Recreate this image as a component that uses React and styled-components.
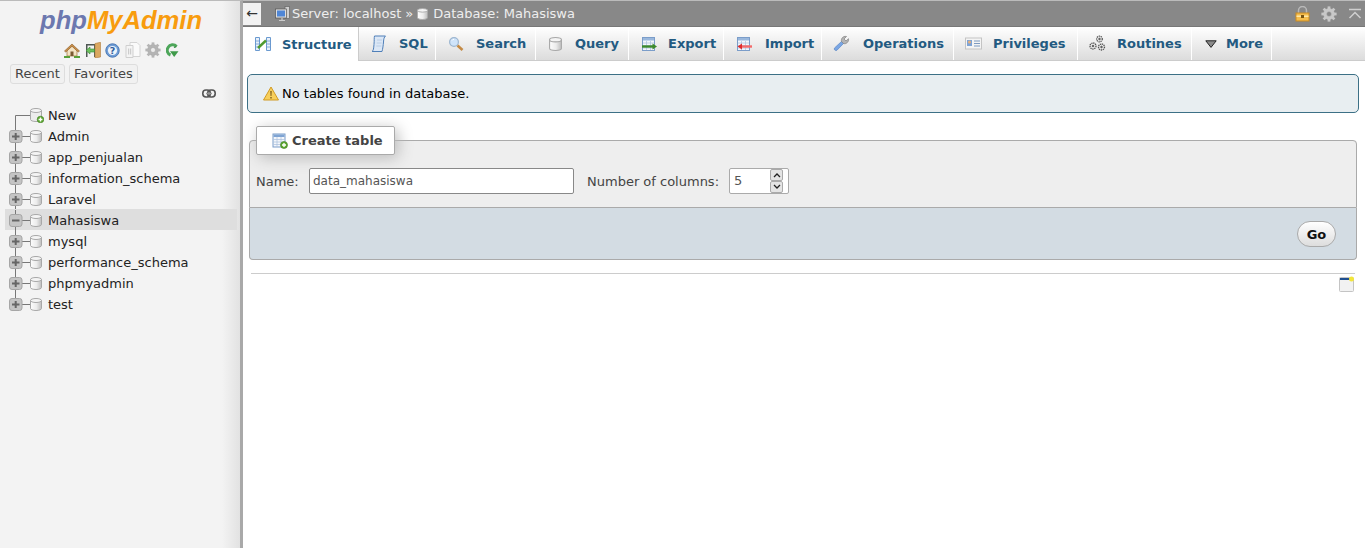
import styled, { createGlobalStyle } from "styled-components"

const GlobalStyle = createGlobalStyle`
  html, body {
    margin: 0;
    height: 100%;
    overflow: hidden;
    background: #fff;
  }
  body {
    font-family: "DejaVu Sans", sans-serif;
    font-size: 13px;
    color: #444;
  }
  * {
    box-sizing: border-box;
  }
`

const Db = ({ width = 12, height = 13 }) => (
  <svg width={width} height={height} viewBox="0 0 12 13" style={{ flex: "none" }}>
    <defs>
      <linearGradient id="dbg" x1="0" x2="1" y1="0" y2="0">
        <stop offset="0" stopColor="#fdfdfd" />
        <stop offset="0.55" stopColor="#ececec" />
        <stop offset="1" stopColor="#bdbdbd" />
      </linearGradient>
    </defs>
    <path d="M.5 2.500v8c0 1.100 2.400 2 5.500 2s5.500-.9 5.500-2v-8z" fill="url(#dbg)" stroke="#a8a8a8" />
    <ellipse cx="6" cy="2.500" rx="5.500" ry="2" fill="#f4f4f4" stroke="#a8a8a8" />
  </svg>
)

const DbNew = () => (
  <svg width="14" height="15" viewBox="0 0 14 15" style={{ flex: "none" }}>
    <path d="M.5 2.500v9c0 1.100 2.400 2 5.500 2s5.500-.9 5.500-2v-9z" fill="#ececec" stroke="#a8a8a8" />
    <ellipse cx="6" cy="2.500" rx="5.500" ry="2" fill="#f4f4f4" stroke="#a8a8a8" />
    <circle cx="10.500" cy="11.500" r="3.300" fill="#5da833" stroke="#3f7d20" strokeWidth=".6" />
    <path d="M8.600 11.500h3.800M10.500 9.600v3.800" stroke="#fff" strokeWidth="1.300" />
  </svg>
)

const TreeGlyph = ({ state, first, last }) => (
  <svg width="25" height="21" viewBox="0 0 25 21" style={{ flex: "none" }}>
    <path
      d={`M10.500 ${first ? 10.5 : 0}V${last ? 10.5 : 21}M10.500 10.500H25`}
      stroke="#777"
      strokeWidth="1"
      fill="none"
    />
    {state && (
      <>
        <rect x="4.500" y="4.500" width="12.500" height="12" rx="2.500" fill="#c4c4c4" stroke="#a6a6a6" />
        <path d={state === "open" ? "M7 10.500h7.500" : "M7 10.500h7.500M10.700 7v7"} stroke="#666" strokeWidth="2" />
      </>
    )}
  </svg>
)

const Home = () => (
  <svg width="16" height="15" viewBox="0 0 16 15">
    <path d="M3 7v6h10V7L8 3z" fill="#f3e3c4" stroke="#a9804a" strokeWidth=".8" />
    <path d="M.5 8 8 1l7.500 7-1.300 1L8 3.300 1.800 9z" fill="#c98f4b" stroke="#8a5a24" strokeWidth=".6" />
    <rect x="6.500" y="8.500" width="3" height="4.500" fill="#7a5a33" />
    <path d="M0 14h6M10 14h6" stroke="#58a03a" strokeWidth="2" />
  </svg>
)

const Exit = () => (
  <svg width="16" height="16" viewBox="0 0 16 16">
    <path d="M1 2h9.500v13H9V3.500H2.500V15H1z" fill="#4f5854" />
    <path d="M10 1.500l5.500-1.200V15L10 16z" fill="#dba861" stroke="#b07c3e" strokeWidth=".6" />
    <path d="M1 8.500 5 5v2h4.500v3H5v2z" fill="#6cc05e" stroke="#3a8a32" strokeWidth=".6" />
  </svg>
)

const Help = () => (
  <svg width="15" height="15" viewBox="0 0 15 15">
    <circle cx="7.500" cy="7.500" r="6.700" fill="#6f9dd6" stroke="#4a78b5" />
    <circle cx="7.500" cy="7.500" r="4.600" fill="#eef3fa" />
    <text x="7.500" y="11" textAnchor="middle" fontSize="9.500" fontWeight="700" fill="#2f5f9e" fontFamily="DejaVu Sans">?</text>
  </svg>
)

const Docs = () => (
  <svg width="16" height="16" viewBox="0 0 16 16">
    <path d="M5 .5h7l3 3v11H5z" fill="#fafafa" stroke="#d4d4d4" />
    <path d="M1 3.500h7v12H1z" fill="#f4f4f4" stroke="#cfcfcf" />
    <path d="M3 6.500h1.200v6H3zM5 6.500h1.200v6H5z" fill="#cdcdcd" />
  </svg>
)

const Gear = ({ color = "#b4b4b4", hole = "#ececec", edge = "#989898" }) => (
  <svg width="16" height="16" viewBox="0 0 16 16">
    <g fill={color}>
      <circle cx="8" cy="8" r="5.400" stroke={edge} strokeWidth=".5" />
      {[0, 45, 90, 135, 180, 225, 270, 315].map(a => (
        <rect key={a} x="6.600" y="0.400" width="2.800" height="3.400" transform={`rotate(${a} 8 8)`} />
      ))}
    </g>
    <circle cx="8" cy="8" r="2.500" fill={hole} stroke={edge} strokeWidth=".5" />
  </svg>
)

const Reload = () => (
  <svg width="13" height="15" viewBox="0 0 13 15">
    <path d="M10.500 3.500A5 5 0 0 0 2.200 4.300 5 5 0 0 0 4.500 12" fill="none" stroke="#4da65a" strokeWidth="3" />
    <path d="M10.500 3.500l-2.500 1" stroke="#2f8a3c" strokeWidth="1.200" />
    <path d="M4 8.300h8.500L8.200 14z" fill="#3f9a4a" />
  </svg>
)

const LinkIcon = () => (
  <svg width="14" height="9" viewBox="0 0 14 9">
    <rect x=".8" y="1" width="7.500" height="7" rx="3.200" fill="none" stroke="#555" strokeWidth="1.600" />
    <rect x="5.700" y="1" width="7.500" height="7" rx="3.200" fill="none" stroke="#555" strokeWidth="1.600" />
    <path d="M4 4.500h6" stroke="#999" strokeWidth="1.500" />
  </svg>
)

const ServerIcon = () => (
  <svg width="15" height="16" viewBox="0 0 15 16">
    <rect x="10" y="0.500" width="4.500" height="12" fill="#cfcfcf" stroke="#666" strokeWidth=".7" />
    <rect x="0.500" y="3" width="11" height="9" fill="#ddd" stroke="#555" strokeWidth=".7" />
    <rect x="2" y="4.500" width="8" height="6" fill="#4f86d6" />
    <path d="M4 14.500h6M7 12v2" stroke="#ccc" strokeWidth="1.200" />
  </svg>
)

const TableBase = ({ children }) => (
  <svg width="16" height="16" viewBox="0 0 16 16">
    <rect x="1.500" y="1.500" width="12" height="13" fill="#f3f6fb" stroke="#7b9dc9" />
    <rect x="2" y="2" width="11" height="2.500" fill="#9ab8dd" />
    <path d="M2 7h11M2 9.500h11M2 12h11M5.500 5v9M9.500 5v9" stroke="#a9c0dc" strokeWidth=".7" />
    {children}
  </svg>
)

const icons = {
  structure: (
    <svg width="16" height="16" viewBox="0 0 16 16">
      <path d="M.5 1.500h4v13h-4zM11.500 1.500h4v13h-4z" fill="#e8f0fa" stroke="#6b9ad0" />
      <path d="M.5 5h4M.5 8h4M.5 11h4M11.500 5h4M11.500 8h4M11.500 11h4" stroke="#6b9ad0" strokeWidth=".8" />
      <path d="M3 12 11 4.500" stroke="#4f9a2f" strokeWidth="2.400" />
    </svg>
  ),
  sql: (
    <svg width="16" height="18" viewBox="0 0 16 18">
      <path d="M3.500 1h11c-1.400 1-1.800 3-2 6s-.8 7-1.500 9.500H1c1.600-.8 1.600-3 2-7S3 2.500 3.500 1z" fill="#dbe7f6" stroke="#4f7fb8" />
      <path d="M6 5h5M5.700 8h5M5.300 11h5" stroke="#b3c9e3" strokeWidth=".8" />
    </svg>
  ),
  search: (
    <svg width="16" height="16" viewBox="0 0 16 16">
      <circle cx="6" cy="6" r="4.400" fill="#cfe4fa" stroke="#9db6d0" strokeWidth="1.200" />
      <path d="M4 4.500a2.500 2.500 0 0 1 2-1.200" stroke="#fff" strokeWidth="1" fill="none" />
      <path d="M9.500 9.500 14.500 14" stroke="#c48a45" strokeWidth="2.600" />
    </svg>
  ),
  query: <Db width={13} height={14} />,
  export: (
    <TableBase>
      <path d="M1 10.500h11" stroke="#3c8a2c" strokeWidth="2.400" />
      <path d="M11.500 7.500 16 10.500l-4.500 3z" fill="#3c8a2c" />
    </TableBase>
  ),
  import: (
    <TableBase>
      <path d="M5 10.500h11" stroke="#f46a6a" strokeWidth="2.400" />
      <path d="M6 7.500 1.500 10.500l4.500 3z" fill="#e02b2b" />
    </TableBase>
  ),
  operations: (
    <svg width="17" height="17" viewBox="0 0 17 17">
      <path d="M1.500 13 9 6l2 2-7 7.200c-1.500 1-3.500-.6-2.500-2.200z" fill="#7aa6e4" stroke="#5a86c4" strokeWidth=".7" />
      <path d="M8.500 6.500c-.8-3 1.800-5.800 5-5l-2.500 2.500 2 2 2.500-2.300c.6 3-2.300 5.800-5 4.800z" fill="#b4b4b4" stroke="#808080" strokeWidth=".7" />
    </svg>
  ),
  privileges: (
    <svg width="17" height="13" viewBox="0 0 17 13">
      <rect x=".5" y="1" width="16" height="11" fill="#f4f4f4" stroke="#c4c4c4" />
      <rect x="2" y="3" width="5" height="6" fill="#7da3d6" />
      <circle cx="4.500" cy="5" r="1.500" fill="#e7b07a" />
      <path d="M9 4h6M9 6.500h6M9 9h6" stroke="#7d9ac0" strokeWidth="1" />
    </svg>
  ),
  routines: (
    <svg width="17" height="17" viewBox="0 0 17 17" fill="none" stroke="#555" strokeDasharray="1.300 .7">
      <circle cx="10.500" cy="4" r="2.800" strokeWidth="1.300" />
      <circle cx="4" cy="11" r="3" strokeWidth="1.300" />
      <circle cx="12.500" cy="12" r="3" strokeWidth="1.300" />
      <circle cx="10.500" cy="4" r=".8" fill="#555" strokeDasharray="none" />
      <circle cx="4" cy="11" r=".8" fill="#555" strokeDasharray="none" />
      <circle cx="12.500" cy="12" r=".8" fill="#555" strokeDasharray="none" />
    </svg>
  ),
}

const DownTri = () => (
  <svg width="12" height="8" viewBox="0 0 12 8">
    <path d="M.8.800h10.400L6 7.400z" fill="#8a8a8a" stroke="#222" strokeWidth="1" strokeLinejoin="round" />
  </svg>
)

const Warn = () => (
  <svg width="16" height="15" viewBox="0 0 16 15">
    <path d="M8 1 15.500 14H.5z" fill="#f7cf5b" stroke="#d09a24" strokeLinejoin="round" />
    <path d="M7.200 5h1.600l-.3 5h-1zM7.200 11h1.600v1.500H7.200z" fill="#8a6a20" />
  </svg>
)

const NewTable = () => (
  <svg width="16" height="16" viewBox="0 0 16 16">
    <rect x="1" y="1" width="12" height="13" fill="#f3f6fb" stroke="#7b9dc9" />
    <rect x="1.500" y="1.500" width="11" height="2.500" fill="#7fa4d3" />
    <path d="M1.500 6.500h11M1.500 9h11M1.500 11.500h11M5 4v10M9 4v10" stroke="#a9c0dc" strokeWidth=".7" />
    <circle cx="12" cy="12" r="3.500" fill="#5da833" stroke="#3f7d20" strokeWidth=".6" />
    <path d="M10 12h4M12 10v4" stroke="#fff" strokeWidth="1.300" />
  </svg>
)

const LockIcon = () => (
  <svg width="15" height="16" viewBox="0 0 15 16">
    <path d="M3.500 7V4.500a4 4 0 0 1 8 0V7" fill="none" stroke="#b9b9b9" strokeWidth="1.500" />
    <rect x="1" y="7" width="13" height="8" fill="#f5bd4c" stroke="#c98a20" />
    <rect x="1.500" y="9.500" width="12" height="1.500" fill="#fde7a8" />
    <rect x="6" y="9" width="3" height="3" fill="#7a5510" />
  </svg>
)

const CollapseUp = () => (
  <svg width="14" height="12" viewBox="0 0 14 12" fill="none" stroke="#cfcfcf" strokeWidth="1.500">
    <path d="M1 1.500h12M1.500 10 7 4.500 12.500 10" />
  </svg>
)

const ConsoleIcon = () => (
  <svg width="15" height="16" viewBox="0 0 15 16">
    <rect x=".5" y="1.500" width="14" height="14" rx="1" fill="#f2f2f2" stroke="#c4c4c4" />
    <rect x="1" y="2" width="11" height="2" fill="#1f4f8f" />
    <circle cx="12.500" cy="3" r="2.500" fill="#f2e63c" />
  </svg>
)

const Chevron = ({ up }) => (
  <svg width="8" height="6" viewBox="0 0 8 6" fill="none" stroke="#222" strokeWidth="1.300">
    <path d={up ? "M1 5 4 2l3 3" : "M1 1l3 3 3-3"} />
  </svg>
)

const databases = [
  "Admin",
  "app_penjualan",
  "information_schema",
  "Laravel",
  "Mahasiswa",
  "mysql",
  "performance_schema",
  "phpmyadmin",
  "test",
]

const tabs = [
  { key: "structure", label: "Structure", width: 116, gap: 11, active: true },
  { key: "sql", label: "SQL", width: 77, gap: 12 },
  { key: "search", label: "Search", width: 100, gap: 12 },
  { key: "query", label: "Query", width: 93, gap: 11 },
  { key: "export", label: "Export", width: 95, gap: 11 },
  { key: "import", label: "Import", width: 98, gap: 13 },
  { key: "operations", label: "Operations", width: 132, gap: 13 },
  { key: "privileges", label: "Privileges", width: 124, gap: 11 },
  { key: "routines", label: "Routines", width: 114, gap: 11 },
]

export default function App() {
  return (
    <>
      <GlobalStyle />
      <Page>
        <Sidebar>
          <Logo>
            <span>php</span>
            <b>MyAdmin</b>
          </Logo>
          <IconRow>
            <Home />
            <Exit />
            <Help />
            <Docs />
            <Gear />
            <Reload />
          </IconRow>
          <RecentRow>
            <Pill>Recent</Pill>
            <Pill>Favorites</Pill>
          </RecentRow>
          <LinkRow>
            <LinkIcon />
          </LinkRow>
          <Tree>
            <TreeRow>
              <TreeGlyph first />
              <DbNew />
              <TreeLabel $new>New</TreeLabel>
            </TreeRow>
            {databases.map((name, i) => (
              <TreeRow key={name} $selected={name === "Mahasiswa"}>
                <TreeGlyph state={name === "Mahasiswa" ? "open" : "closed"} last={i === databases.length - 1} />
                <Db />
                <TreeLabel>{name}</TreeLabel>
              </TreeRow>
            ))}
          </Tree>
        </Sidebar>

        <Main>
          <TopBar>
            <BackButton>←</BackButton>
            <Crumbs>
              <ServerIcon />
              <span>Server: localhost</span>
              <Sep>»</Sep>
              <Db width={11} height={12} />
              <DbName>Database: Mahasiswa</DbName>
            </Crumbs>
            <TopIcons>
              <LockIcon />
              <Gear color="#c8c8c8" hole="#888" edge="#c8c8c8" />
              <CollapseUp />
            </TopIcons>
          </TopBar>

          <TabBar>
            {tabs.map(t => (
              <Tab key={t.key} $active={t.active} $width={t.width}>
                <TabIcon $gap={t.gap}>{icons[t.key]}</TabIcon>
                {t.label}
              </Tab>
            ))}
            <MoreTab>
              <DownTri />
              More
            </MoreTab>
          </TabBar>

          <Content>
            <Notice>
              <Warn />
              No tables found in database.
            </Notice>

            <CreateForm>
              <Legend>
                <NewTable />
                Create table
              </Legend>
              <FormRow>
                <FieldLabel>Name:</FieldLabel>
                <NameInput>data_mahasiswa</NameInput>
                <ColumnsLabel>Number of columns:</ColumnsLabel>
                <Spinner>
                  <SpinValue>5</SpinValue>
                  <SpinButtons>
                    <SpinButton><Chevron up /></SpinButton>
                    <SpinButton><Chevron /></SpinButton>
                  </SpinButtons>
                </Spinner>
              </FormRow>
            </CreateForm>
            <FormFooter>
              <GoButton>Go</GoButton>
            </FormFooter>

            <Rule />
            <ConsoleRow>
              <ConsoleIcon />
            </ConsoleRow>
          </Content>
        </Main>
      </Page>
    </>
  )
}

const Page = styled.div`
  display: flex;
  height: 548px;
  overflow: hidden;
`

const Sidebar = styled.aside`
  width: 243px;
  flex: none;
  height: 100%;
  background: linear-gradient(to right, #f3f3f3 0, #f3f3f3 222px, #e2e2e2 240px);
  border-right: 3px solid #a9a9a9;
  border-top: 1px solid #bbb;
`

const Logo = styled.div`
  height: 41px;
  padding: 4px 0 0 40px;
  font-family: "Liberation Sans", sans-serif;
  font-style: italic;
  font-weight: 700;
  font-size: 25.600px;
  line-height: 30px;
  white-space: nowrap;
  span {
    color: #6c78af;
  }
  b {
    color: #f89c0e;
  }
`

const IconRow = styled.div`
  display: flex;
  align-items: center;
  gap: 4.500px;
  height: 16px;
  padding-left: 64px;
`

const RecentRow = styled.div`
  display: flex;
  gap: 4px;
  margin-top: 6px;
  padding-left: 10px;
`

const Pill = styled.div`
  height: 20px;
  padding: 0 4px;
  line-height: 18px;
  color: #444;
  background: #f1f1f1;
  border: 1px solid #ddd;
  border-radius: 3px;
`

const LinkRow = styled.div`
  display: flex;
  justify-content: flex-end;
  height: 20px;
  padding: 5px 24px 0 0;
`

const Tree = styled.div`
  display: flex;
  flex-direction: column;
`

const TreeRow = styled.div`
  display: flex;
  align-items: center;
  height: 21px;
  padding-top: 2px;
  margin: 0 3px 0 5px;
  background: ${p => (p.$selected ? "#dedede" : "transparent")};
`

const TreeLabel = styled.span`
  margin-left: ${p => (p.$new ? "4px" : "6px")};
  color: #222;
`

const Main = styled.main`
  flex: 1;
  min-width: 0;
  display: flex;
  flex-direction: column;
`

const TopBar = styled.div`
  display: flex;
  align-items: center;
  height: 27px;
  flex: none;
  background: #888;
  border-top: 1px solid #bbb;
  border-bottom: 1px solid #777;
  color: #eee;
`

const BackButton = styled.div`
  width: 18px;
  height: 22px;
  font-size: 14px;
  line-height: 21px;
  text-align: center;
  color: #333;
  background: #f2f2f2;
`

const Crumbs = styled.div`
  display: flex;
  align-items: center;
  margin-left: 14px;
  gap: 2px;
  flex: 1;
  white-space: nowrap;
`

const Sep = styled.span`
  margin: 0 2px;
`

const DbName = styled.span`
  margin-left: 3px;
`

const TopIcons = styled.div`
  display: flex;
  align-items: center;
  gap: 11px;
  padding-right: 3px;
`

const TabBar = styled.nav`
  display: flex;
  height: 34px;
  flex: none;
  background: linear-gradient(#fff, #dcdcdc);
  border-bottom: 1px solid #ccc;
`

const Tab = styled.div`
  display: flex;
  align-items: center;
  width: ${p => p.$width}px;
  height: ${p => (p.$active ? "34px" : "33px")};
  padding-left: 11px;
  font-weight: 700;
  color: #235a81;
  white-space: nowrap;
  border-right: 1px solid #fff;
  background: ${p => (p.$active ? "#fff" : "transparent")};
  ${p => p.$active && "border-right: 1px solid #ccc; position: relative; z-index: 1;"}
`

const TabIcon = styled.span`
  display: flex;
  align-items: center;
  justify-content: center;
  width: 17px;
  height: 18px;
  margin-right: ${p => p.$gap}px;
`

const MoreTab = styled(Tab)`
  width: 80px;
  padding-left: 13px;
  gap: 9px;
`

const Content = styled.div`
  display: flex;
  flex-direction: column;
  padding: 13px 6px 0 4px;
`

const Notice = styled.div`
  display: flex;
  align-items: center;
  gap: 3px;
  height: 39px;
  padding-left: 15px;
  color: #000;
  background: #e8eef1;
  border: 1px solid #3c7086;
  border-radius: 5px;
`

const CreateForm = styled.fieldset`
  margin: 13px 2px 0;
  padding: 0 0 13px;
  min-width: 0;
  background: #eee;
  border: 1px solid #aaa;
  border-radius: 4px 4px 0 0;
`

const Legend = styled.legend`
  display: flex;
  align-items: center;
  gap: 4px;
  height: 29px;
  margin-left: 6px;
  padding: 0 11px 0 15px;
  font-weight: 700;
  color: #444;
  background: #fff;
  border: 1px solid #aaa;
  border-radius: 2px;
  box-shadow: 3px 3px 15px #bbb;
`

const FormRow = styled.div`
  display: flex;
  align-items: center;
  height: 26px;
  margin-top: 13px;
  padding-left: 6px;
`

const FieldLabel = styled.label`
  width: 53px;
`

const NameInput = styled.div`
  width: 265px;
  height: 26px;
  padding-left: 3px;
  font-size: 12px;
  line-height: 25px;
  color: #555;
  background: #fff;
  border: 1px solid #888;
  border-radius: 2px;
`

const ColumnsLabel = styled.label`
  margin-left: 13px;
  width: 142px;
`

const Spinner = styled.div`
  display: flex;
  justify-content: space-between;
  width: 60px;
  height: 26px;
  background: #fff;
  border: 1px solid #aaa;
  border-radius: 2px;
`

const SpinValue = styled.span`
  padding-left: 4px;
  line-height: 24px;
  color: #555;
`

const SpinButtons = styled.div`
  display: flex;
  flex-direction: column;
  width: 13px;
  margin-right: 5px;
`

const SpinButton = styled.div`
  flex: 1;
  display: flex;
  align-items: center;
  justify-content: center;
  background: #e4e4e4;
  border: 1px solid #aaa;
  border-radius: 2px;
`

const FormFooter = styled.div`
  display: flex;
  justify-content: flex-end;
  align-items: center;
  height: 52px;
  margin: 0 2px;
  padding-right: 20px;
  background: #d3dce3;
  border: 1px solid #aaa;
  border-top: none;
  border-radius: 0 0 4px 4px;
`

const GoButton = styled.div`
  width: 39px;
  height: 26px;
  line-height: 25px;
  text-align: center;
  font-weight: 700;
  color: #111;
  background: linear-gradient(#fff, #ddd);
  border: 1px solid #aaa;
  border-radius: 13px;
`

const Rule = styled.div`
  height: 1px;
  margin: 13px 4px 0;
  background: #ccc;
`

const ConsoleRow = styled.div`
  display: flex;
  justify-content: flex-end;
  padding: 2px 5px 0 0;
`
